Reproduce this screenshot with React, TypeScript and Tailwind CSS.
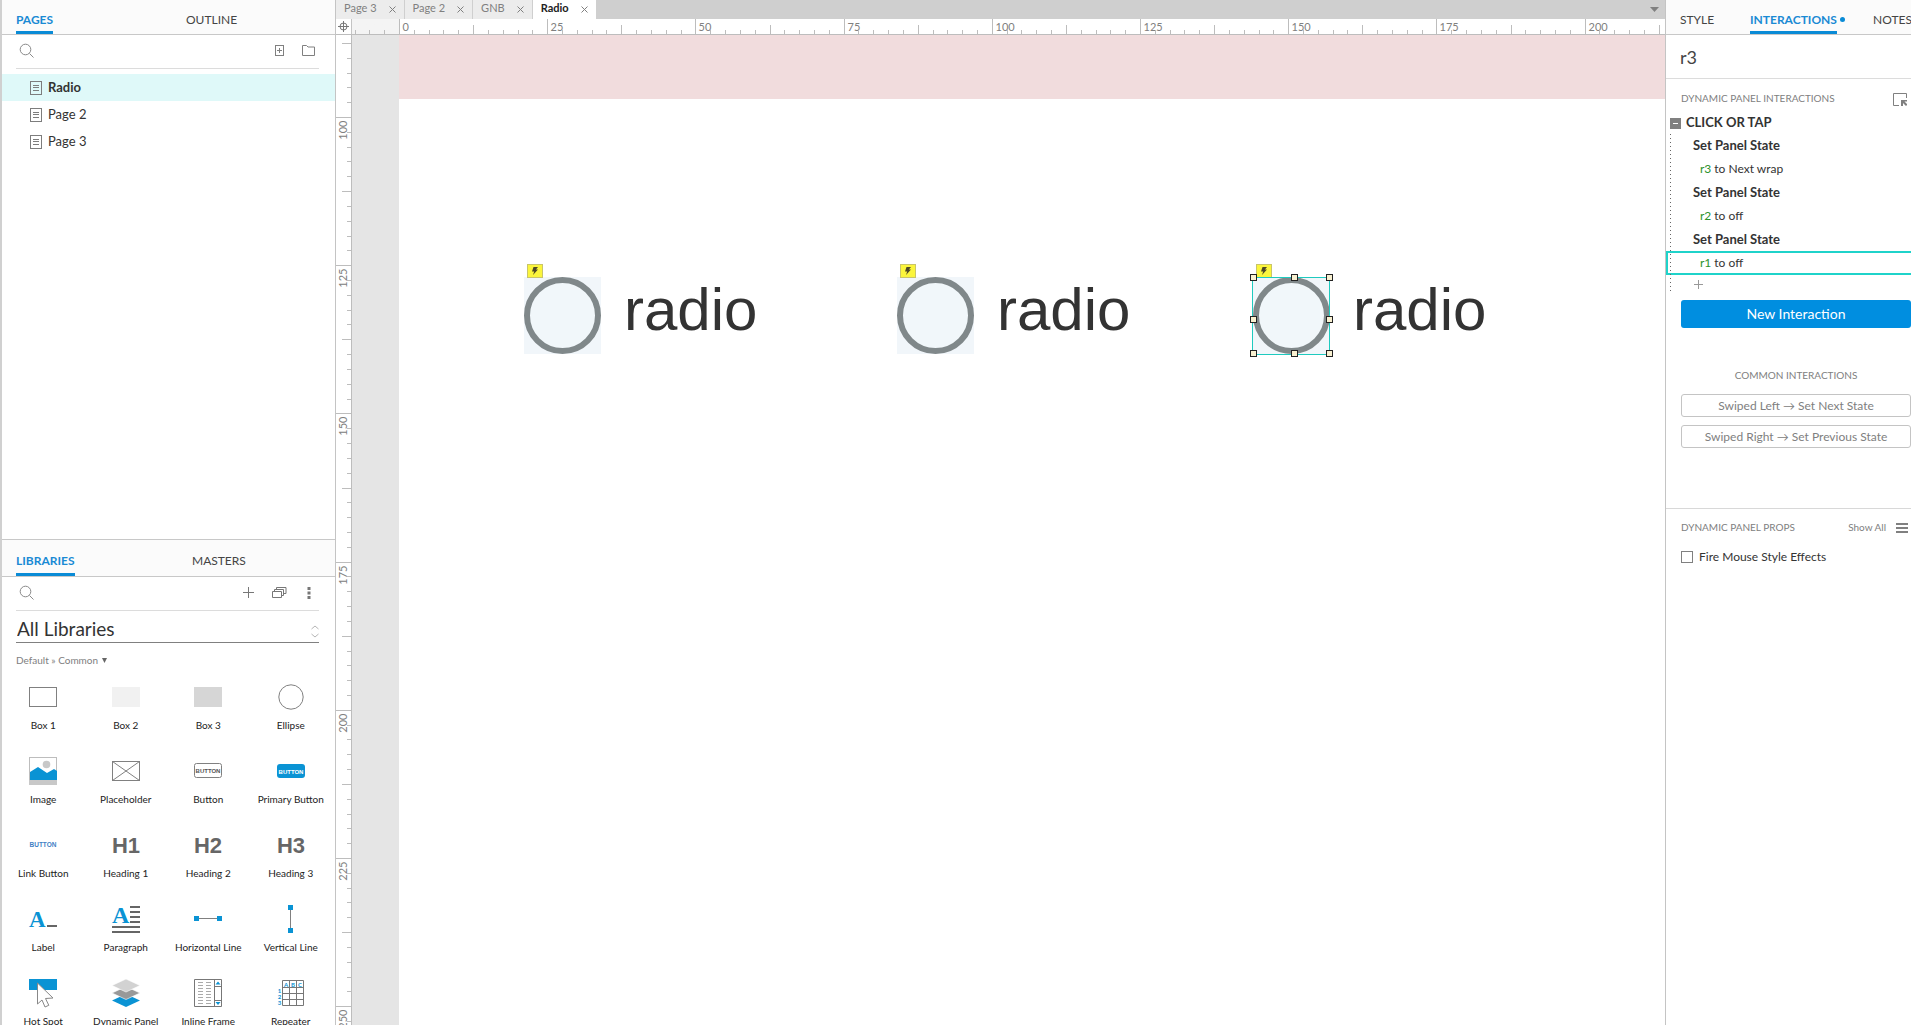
import React, { useState } from "react";

const pages = ["Radio", "Page 2", "Page 3"];
const openTabs = ["Page 3", "Page 2", "GNB", "Radio"];

const radios = [
  { id: "r1", left: 125 },
  { id: "r2", left: 498 },
  { id: "r3", left: 854 },
];

const actions = [
  { target: "r3", text: "to Next wrap" },
  { target: "r2", text: "to off" },
  { target: "r1", text: "to off" },
];

const TICK = 14.82;
const BLUE = "#0a93d4";

const SearchIcon = () => (
  <svg width="16" height="16" viewBox="0 0 16 16" fill="none" stroke="#8a8a8a">
    <circle cx="6.5" cy="6.5" r="5.3" />
    <path d="M10.5 10.5l4 4" />
  </svg>
);

const PageIcon = () => (
  <svg width="12" height="14" viewBox="0 0 12 14" fill="none" stroke="#7d7d7d">
    <rect x="0.5" y="0.5" width="11" height="13" />
    <path d="M3 4.5h6M3 6.5h6M3 9.5h6" />
  </svg>
);

const BoltBadge = () => (
  <svg className="absolute -top-[13px] left-[3px]" width="16" height="14" viewBox="0 0 16 14">
    <rect x="0.5" y="0.5" width="15" height="13" fill="#fbf53c" stroke="#c9c56a" />
    <path d="M6.500 3H11L9 5.500h2L6 11l1.200-3.500H5z" fill="#4c4726" />
  </svg>
);

const icons: Record<string, React.ReactNode> = {
  "Box 1": <rect x="0.500" y="4.500" width="27" height="19" fill="#fff" stroke="#808080" />,
  "Box 2": <rect y="4" width="28" height="20" fill="#f1f1f1" />,
  "Box 3": <rect y="4" width="28" height="20" fill="#d6d6d6" />,
  Ellipse: <circle cx="14" cy="14" r="12.200" fill="#fff" stroke="#808080" />,
  Image: (
    <>
      <rect x="0.500" y="0.500" width="27" height="27" fill="#fff" stroke="#bdbdbd" />
      <circle cx="17.500" cy="7.500" r="3.800" fill="#c8c8c8" />
      <path d="M1 15l8-5 9 6 7-4 3 2v9H1z" fill={BLUE} />
      <rect y="23" width="28" height="5" fill="#c8c8c8" />
    </>
  ),
  Placeholder: (
    <g fill="none" stroke="#808080">
      <rect x="0.500" y="4.500" width="27" height="19" />
      <path d="M0.500 4.500l27 19M27.500 4.500l-27 19" />
    </g>
  ),
  Button: (
    <>
      <rect x="0.500" y="6.500" width="27" height="14" rx="2" fill="#fff" stroke="#808080" />
      <text x="14" y="16" textAnchor="middle" fontFamily="Liberation Sans, sans-serif" fontSize="6" fontWeight="700" fill="#555">BUTTON</text>
    </>
  ),
  "Primary Button": (
    <>
      <rect y="7" width="28" height="14" rx="3" fill={BLUE} />
      <text x="14" y="17" textAnchor="middle" fontFamily="Liberation Sans, sans-serif" fontSize="6" fontWeight="700" fill="#fff">BUTTON</text>
    </>
  ),
  "Link Button": (
    <text x="14" y="16" textAnchor="middle" fontFamily="Liberation Sans, sans-serif" fontSize="6.500" fontWeight="700" fill="#3f7fc4">BUTTON</text>
  ),
  Label: (
    <>
      <text x="0" y="22" fontFamily="Liberation Serif, serif" fontSize="23" fontWeight="700" fill={BLUE}>A</text>
      <rect x="18" y="20" width="10" height="2" fill="#666" />
    </>
  ),
  Paragraph: (
    <>
      <text x="0" y="18" fontFamily="Liberation Serif, serif" fontSize="24" fontWeight="700" fill={BLUE}>A</text>
      <path d="M18 2h10M18 7h10M18 12h10M18 17h10M0 22h28M0 27h28" stroke="#666" strokeWidth="2" />
    </>
  ),
  "Horizontal Line": (
    <>
      <path d="M2 13.500h24" stroke="#808080" />
      <path d="M0 11h5v5H0zM23 11h5v5h-5z" fill={BLUE} />
    </>
  ),
  "Vertical Line": (
    <>
      <path d="M13.500 2v24" stroke="#808080" />
      <path d="M11 0h5v5h-5zM11 23h5v5h-5z" fill={BLUE} />
    </>
  ),
  "Hot Spot": (
    <>
      <rect width="28" height="11" fill={BLUE} />
      <path d="M8.500 4v21l4.500-4 3 7 3.800-1.700-3.300-6.800 7.500-.5z" fill="#fff" stroke="#888" />
    </>
  ),
  "Dynamic Panel": (
    <>
      <path d="M14 15l14 6.500L14 28 0 21.500z" fill={BLUE} />
      <path d="M14 7.500L28 14l-14 6.500L0 14z" fill="#999" stroke="#fff" strokeWidth="0.600" />
      <path d="M14 0l14 6.500L14 13 0 6.500z" fill="#d2d2d2" stroke="#fff" strokeWidth="0.600" />
    </>
  ),
  "Inline Frame": (
    <>
      <path d="M0.500 0.500h27v27h-27zM20.500 0.500v27M20.500 7.500h7M20.500 21.500h7" fill="#fff" stroke="#777" />
      <path d="M4 3.500h13M4 6.500h13M4 9.500h13M4 12.500h13M4 15.500h13M4 18.500h13M4 21.500h13M4 24.500h13" stroke="#aaa" strokeDasharray="5 3" />
      <path d="M24 2.500l2.500 3h-5zM24 26l-2.500-3h5z" fill={BLUE} />
    </>
  ),
  Repeater: (
    <>
      <path d="M5.500 1.500h21v25h-21zM5.500 8.500h21M5.500 14.500h21M5.500 20.500h21M12.500 1.500v25M19.500 1.500v25" fill="none" stroke="#777" />
      <g fontSize="6" fontWeight="700" fill={BLUE} textAnchor="middle">
        <text x="9" y="7.500">A</text>
        <text x="16" y="7.500">B</text>
        <text x="23" y="7.500">C</text>
        <text x="2.500" y="13.500">1</text>
        <text x="2.500" y="19.500">2</text>
        <text x="2.500" y="26">3</text>
      </g>
    </>
  ),
};

["1", "2", "3"].forEach((n) => {
  icons[`Heading ${n}`] = (
    <text x="14" y="22" textAnchor="middle" fontFamily="Liberation Sans, sans-serif" fontSize="22" fontWeight="700" fill="#666">
      H{n}
    </text>
  );
});

const widgets = [
  "Box 1", "Box 2", "Box 3", "Ellipse",
  "Image", "Placeholder", "Button", "Primary Button",
  "Link Button", "Heading 1", "Heading 2", "Heading 3",
  "Label", "Paragraph", "Horizontal Line", "Vertical Line",
  "Hot Spot", "Dynamic Panel", "Inline Frame", "Repeater",
];

const PanelTab = ({ label, active = false }: { label: string; active?: boolean }) => (
  <button
    className={`h-full border-b-3 pt-2 text-xs whitespace-nowrap ${
      active ? "border-[#0a8bd6] font-bold text-[#1a8ad4]" : "border-transparent text-[#444]"
    }`}
  >
    {label}
  </button>
);

// ticks every 2.5 units, a label on every tenth one
const Ruler = ({ vertical = false }: { vertical?: boolean }) => {
  const ticks = [];
  for (let i = vertical ? -5 : -3; i < 100; i++) {
    const pos = Math.round(i * TICK + (vertical ? 82 : 47)) + 0.5;
    const start = i % 10 === 0 ? 0 : i % 5 === 0 ? 6 : 11;
    ticks.push(
      <g key={i}>
        <path d={vertical ? `M${start} ${pos}H16` : `M${pos} ${start}V16`} stroke="#bdbdbd" />
        {i % 10 === 0 && (
          <text
            fontSize="11"
            fill="#808080"
            textAnchor={vertical ? "end" : "start"}
            transform={vertical ? `translate(11 ${pos + 3}) rotate(-90)` : `translate(${pos + 3} 12)`}
          >
            {vertical ? 100 + i * 2.5 : i * 2.5}
          </text>
        )}
      </g>
    );
  }
  return <svg className="block h-full w-full overflow-hidden">{ticks}</svg>;
};

const LeftPanel = () => {
  const [selected, setSelected] = useState("Radio");

  return (
    <aside className="flex w-[336px] shrink-0 flex-col border-r border-l-2 border-r-[#c4c4c4] border-l-[#d0d0d0] bg-white">
      <section className="flex h-[540px] shrink-0 flex-col border-b border-[#c8c8c8]">
        <div className="flex h-[35px] border-b border-[#c8c8c8] bg-[#fbfbfb] pl-[14px]">
          <div className="w-[170px]">
            <PanelTab label="PAGES" active />
          </div>
          <PanelTab label="OUTLINE" />
        </div>
        <div className="mr-4 ml-[14px] flex h-[34px] items-center border-b border-[#dcdcdc] pb-0.5 pl-[3px]">
          <SearchIcon />
          <input aria-label="Search pages" className="min-w-0 flex-1 px-2 text-[13px] outline-none" />
          <button aria-label="Add page" className="mr-[18px]">
            <svg width="9" height="11" viewBox="0 0 9 11" fill="none" stroke="#808080" className="block">
              <rect x="0.500" y="0.500" width="8" height="10" />
              <path d="M2 5.500h5M4.500 3v5" />
            </svg>
          </button>
          <button aria-label="Add folder" className="mr-1">
            <svg width="13" height="11" viewBox="0 0 13 11" fill="none" stroke="#808080" className="block">
              <path d="M0.500 10.500v-10h4l1.500 1.500h6.500v8.500z" />
            </svg>
          </button>
        </div>
        <ul className="pt-[5px]">
          {pages.map((page) => (
            <li key={page}>
              <button
                onClick={() => setSelected(page)}
                className={`flex h-[27px] w-full items-center gap-1.5 pl-7 text-[13px] text-[#333] ${
                  page === selected ? "bg-[#dff9f9] font-bold" : ""
                }`}
              >
                <PageIcon />
                {page}
              </button>
            </li>
          ))}
        </ul>
      </section>

      <section className="flex min-h-0 flex-1 flex-col overflow-hidden">
        <div className="flex h-[37px] shrink-0 border-b border-[#c8c8c8] bg-[#fbfbfb] pl-[14px]">
          <div className="w-[176px]">
            <PanelTab label="LIBRARIES" active />
          </div>
          <PanelTab label="MASTERS" />
        </div>
        <div className="mr-4 ml-[14px] flex h-[34px] shrink-0 items-center border-b border-[#dcdcdc] pb-0.5 pl-[3px]">
          <SearchIcon />
          <input aria-label="Search libraries" className="min-w-0 flex-1 px-2 text-[13px] outline-none" />
          <button aria-label="Add library" className="mr-[18px]">
            <svg width="11" height="11" viewBox="0 0 11 11" stroke="#777" className="block">
              <path d="M0 5.500h11M5.500 0v11" />
            </svg>
          </button>
          <button aria-label="Manage libraries" className="mr-5">
            <svg width="15" height="11" viewBox="0 0 15 11" fill="none" stroke="#777" className="block">
              <path d="M0.500 4.500h9v6h-9zM2.500 4.500v-2h9v6h-2M4.500 2.500v-2h9.500v6h-2.500" />
            </svg>
          </button>
          <button aria-label="More" className="mr-2">
            <svg width="4" height="12" viewBox="0 0 4 12" fill="#777" className="block">
              <path d="M0.500 0h3v3h-3zM0.500 4.500h3v3h-3zM0.500 9h3v3h-3z" />
            </svg>
          </button>
        </div>
        <div className="relative mr-4 ml-[14px] h-8 shrink-0 border-b border-[#808080]">
          <select aria-label="Library" className="h-full w-full appearance-none bg-transparent pt-1 pl-px text-[19px] text-[#333] outline-none">
            <option>All Libraries</option>
          </select>
          <svg className="pointer-events-none absolute top-3.5 right-0" width="8" height="13" viewBox="0 0 8 13" fill="none" stroke="#b5b5b5">
            <path d="M0.500 4L4 1l3.500 3M0.500 9L4 12l3.500-3" />
          </svg>
        </div>
        <button className="mt-[9px] flex h-4 shrink-0 items-center gap-1 pl-[14px] text-[10px] text-[#808080]">
          Default » Common
          <svg width="5" height="5" viewBox="0 0 5 5" fill="#666">
            <path d="M0 0h5L2.500 5z" />
          </svg>
        </button>
        <div className="mr-[3px] grid grid-cols-4 pt-[15px]">
          {widgets.map((name) => (
            <button key={name} className="flex h-[74px] flex-col items-center gap-[7px]">
              <svg width="28" height="28" viewBox="0 0 28 28" className="shrink-0 overflow-visible">
                {icons[name]}
              </svg>
              <span className="text-[10px] leading-[14px] whitespace-nowrap text-[#222]">{name}</span>
            </button>
          ))}
        </div>
      </section>
    </aside>
  );
};

const RadioWidget = ({ left, selected }: { left: number; selected: boolean }) => (
  <div className="absolute top-[242px] flex items-center gap-[23px]" style={{ left }}>
    <div className="relative h-[77px] w-[77px] bg-[#f1f6fa]">
      <div className="h-full w-full rounded-full border-6 border-[#80888a] bg-[#f1f7fa]" />
      <BoltBadge />
      {selected && (
        <svg className="absolute -top-1 -left-1" width="84" height="85" viewBox="0 0 84 85">
          <rect x="3.500" y="4.500" width="77" height="77" fill="none" stroke="#1fcabf" />
          {[4.5, 45.500, 80.500].map((x) =>
            [4.5, 46.500, 80.500].map((y) =>
              x === 45.500 && y === 46.500 ? null : (
                <rect key={`${x}-${y}`} x={x - 3} y={y - 3} width="6" height="6" fill="#f8f0d0" stroke="#222" />
              )
            )
          )}
        </svg>
      )}
    </div>
    <span className="-mt-3 font-['Liberation_Sans',sans-serif] text-[60px] leading-[68px] text-[#333]">radio</span>
  </div>
);

const Editor = () => (
  <main className="flex min-w-0 flex-1 flex-col">
    <div className="flex h-[19px] shrink-0 items-stretch bg-[#cfcfcf] text-[11px]">
      {openTabs.map((tab) => (
        <div
          key={tab}
          className={`flex items-center gap-3 border-r border-[#cfcfcf] pr-2 pb-0.5 pl-2 ${
            tab === "Radio" ? "bg-white font-bold text-[#222]" : "bg-[#ececec] text-[#808080]"
          }`}
        >
          <button>{tab}</button>
          <button aria-label={`Close ${tab}`} className="pt-0.5">
            <svg width="7" height="7" viewBox="0 0 7 7" stroke="#808080" className="block">
              <path d="M0.500 0.500l6 6M6.500 0.500l-6 6" />
            </svg>
          </button>
        </div>
      ))}
      <button aria-label="All tabs" className="ml-auto pr-1.5">
        <svg width="9" height="5" viewBox="0 0 9 5" fill="#808080">
          <path d="M0 0h9L4.500 5z" />
        </svg>
      </button>
    </div>
    <div className="flex h-4 shrink-0 border-b border-[#bdbdbd]">
      <div className="flex w-4 shrink-0 items-center justify-center border-r border-[#c4c4c4]">
        <svg width="11" height="11" viewBox="0 0 11 11" fill="none" stroke="#777">
          <circle cx="5.500" cy="5.500" r="3.500" />
          <path d="M0 5.500h11M5.500 0v11" />
        </svg>
      </div>
      <div className="min-w-0 flex-1 bg-linear-to-r from-[#f4f4f4] from-[47px] to-white to-[47px]">
        <Ruler />
      </div>
    </div>
    <div className="flex min-h-0 flex-1">
      <div className="w-4 shrink-0 border-r border-[#bdbdbd]">
        <Ruler vertical />
      </div>
      <div className="w-[47px] shrink-0 bg-[#e5e5e5]" />
      <div className="relative min-w-0 flex-1 overflow-hidden bg-white">
        <div className="h-16 bg-[#f1dcdd]" />
        {radios.map((radio) => (
          <RadioWidget key={radio.id} left={radio.left} selected={radio.id === "r3"} />
        ))}
      </div>
    </div>
  </main>
);

const RightPanel = () => (
  <aside className="flex w-[246px] shrink-0 flex-col overflow-hidden border-l border-[#c4c4c4] bg-white text-xs text-[#333]">
    <div className="flex h-[35px] shrink-0 border-b border-[#c8c8c8] bg-[#fbfbfb] pl-[14px]">
      <div className="w-[70px] shrink-0">
        <PanelTab label="STYLE" />
      </div>
      <div className="flex w-[123px] shrink-0 items-center gap-[3px]">
        <PanelTab label="INTERACTIONS" active />
        <span className="mt-1 h-[5px] w-[5px] rounded-full bg-[#0a8bd6]" />
      </div>
      <PanelTab label="NOTES" />
    </div>
    <div className="flex h-11 shrink-0 items-center border-b border-[#dcdcdc] pl-[14px]">
      <input aria-label="Name" defaultValue="r3" className="w-full bg-transparent text-[18px] text-[#444] outline-none" />
    </div>

    <section className="flex h-[430px] shrink-0 flex-col border-b border-[#d8d8d8]">
      <div className="mt-2.5 flex h-5 items-center justify-between pr-1 pl-[15px]">
        <h2 className="text-[10px] text-[#808080]">DYNAMIC PANEL INTERACTIONS</h2>
        <svg width="14" height="13" viewBox="0 0 14 13" fill="none" stroke="#808080">
          <path d="M6 12.500H0.500v-12h13V5" />
          <path d="M8 7h6v1.500h-2.500l3 3-1.500 1.500-3-3V13H8z" fill="#808080" stroke="none" />
        </svg>
      </div>
      <div className="mt-[3px] flex h-[22px] items-center gap-[5px] pl-1">
        <button aria-label="Collapse" className="flex h-[11px] w-[11px] items-center justify-center bg-[#808080]">
          <span className="h-px w-[5px] bg-white" />
        </button>
        <h3 className="text-[13px] font-bold">CLICK OR TAP</h3>
      </div>
      <div className="relative">
        {actions.map((action) => (
          <div key={action.target}>
            <p className="flex h-[23px] items-center pl-[27px] text-[13px] font-bold">Set Panel State</p>
            <button
              className={`flex h-6 w-full items-center gap-[3px] ${
                action.target === "r1" ? "border-2 border-r-0 border-[#1fd3ca] pl-8" : "pl-[34px]"
              }`}
            >
              <span className="text-[#2c922c]">{action.target}</span>
              {action.text}
            </button>
          </div>
        ))}
        <button aria-label="Add target" className="block h-[18px] pl-7">
          <svg width="9" height="9" viewBox="0 0 9 9" stroke="#999">
            <path d="M0 4.500h9M4.500 0v9" />
          </svg>
        </button>
        <svg className="pointer-events-none absolute top-0 left-1 h-full w-px">
          <path d="M0.500 0v158" stroke="#666" strokeDasharray="1 3" />
        </svg>
      </div>
      <div className="mt-[7px] flex flex-col pl-[15px]">
        <button className="h-7 rounded-[3px] bg-[#008ee0] text-[14px] text-white">New Interaction</button>
        <h2 className="mt-[37px] text-center text-[10px] leading-5 text-[#808080]">COMMON INTERACTIONS</h2>
        <button className="mt-[9px] h-[23px] rounded-[3px] border border-[#c4c4c4] text-[#808080]">Swiped Left → Set Next State</button>
        <button className="mt-2 h-[23px] rounded-[3px] border border-[#c4c4c4] text-[#808080]">Swiped Right → Set Previous State</button>
      </div>
    </section>

    <section className="pt-[9px] pl-[15px]">
      <div className="flex h-5 items-center pr-[3px] text-[10px] text-[#808080]">
        <h2 className="flex-1">DYNAMIC PANEL PROPS</h2>
        <button className="mr-2.5">Show All</button>
        <button aria-label="Menu">
          <svg width="12" height="10" viewBox="0 0 12 10" stroke="#808080" strokeWidth="2">
            <path d="M0 1h12M0 5h12M0 9h12" />
          </svg>
        </button>
      </div>
      <label className="mt-[9px] flex h-5 items-center gap-1.5">
        <input type="checkbox" className="h-3 w-3 appearance-none border border-[#808080] checked:bg-[#008ee0]" />
        Fire Mouse Style Effects
      </label>
    </section>
  </aside>
);

const App: React.FC = () => {
  return (
    <div className="flex h-screen overflow-hidden bg-white font-[Lato,sans-serif]">
      <LeftPanel />
      <Editor />
      <RightPanel />
    </div>
  );
};

export default App;
